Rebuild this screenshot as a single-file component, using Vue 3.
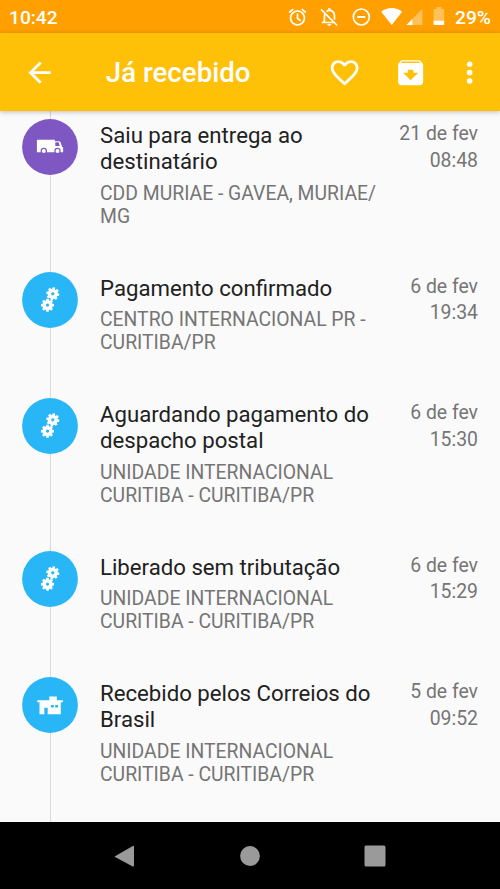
<script setup>
const events = [
  { icon: 'truck', title: ['Saiu para entrega ao', 'destinatário'], place: ['CDD MURIAE - GAVEA, MURIAE/', 'MG'], date: '21 de fev', time: '08:48' },
  { icon: 'gears', title: ['Pagamento confirmado'], place: ['CENTRO INTERNACIONAL PR -', 'CURITIBA/PR'], date: '6 de fev', time: '19:34' },
  { icon: 'gears', title: ['Aguardando pagamento do', 'despacho postal'], place: ['UNIDADE INTERNACIONAL', 'CURITIBA - CURITIBA/PR'], date: '6 de fev', time: '15:30' },
  { icon: 'gears', title: ['Liberado sem tributação'], place: ['UNIDADE INTERNACIONAL', 'CURITIBA - CURITIBA/PR'], date: '6 de fev', time: '15:29' },
  { icon: 'post', title: ['Recebido pelos Correios do', 'Brasil'], place: ['UNIDADE INTERNACIONAL', 'CURITIBA - CURITIBA/PR'], date: '5 de fev', time: '09:52' },
]
const teeth = [0, 45, 90, 135, 180, 225, 270, 315]
const gears = [
  { x: 30.8, y: 21.8, turn: 10 },
  { x: 25.5, y: 33.2, turn: 0 },
]
</script>

<template>
  <div class="screen">
    <header class="status">
      <span class="clock">10:42</span>
      <svg class="status-icons" viewBox="0 0 160 33" fill="#fff">
        <g fill="none" stroke="#fff" stroke-width="1.7">
          <circle cx="11.5" cy="18" r="7" />
          <path d="M11.5 13.5v5l3.4 2.2M3.2 12.5l4-3.4M19.8 12.500l-4-3.400" />
          <circle cx="75.3" cy="17" r="8" />
          <path d="M71.3 17h8" stroke-width="2" />
          <path d="M39.2 13.1c-.7 1.1-.8 2.4-.8 3.900v4.200l-1.300 1.300h12.200M40.600 11.500c3.700-2.700 7.900.1 7.900 4.600v3.700M35 9.300l16.200 16.200" />
        </g>
        <path d="M42 8.200h2.600v2.500H42zM41.300 24h4c0 2.400-4 2.400-4 0z" />
        <path d="M95.200 11.700c5.800-4.900 15.100-4.900 20.900 0L105.700 25z" />
        <path d="M120.500 25l15.800-16v16z" opacity=".35" />
        <path d="M120.500 25l5.800-6v6z" />
        <path d="M147.500 9h3V7h4.800v2h2.900v12h-10.700z" opacity=".35" />
        <path d="M147.500 20.800h10.700v3.100q0 1.100-1.100 1.100h-8.500q-1.100 0-1.100-1.100z" />
      </svg>
      <span class="battery">29%</span>
    </header>

    <nav class="toolbar">
      <svg class="tool" viewBox="0 0 24 24"><path d="M20 11H7.83l5.590-5.590L12 4l-8 8 8 8 1.410-1.410L7.830 13H20v-2z" /></svg>
      <h1>Já recebido</h1>
      <svg class="tool heart" viewBox="0 0 24 24"><path d="M16.5 3c-1.74 0-3.41.81-4.5 2.09C10.91 3.81 9.24 3 7.5 3 4.42 3 2 5.42 2 8.5c0 3.78 3.4 6.86 8.55 11.54L12 21.35l1.45-1.32C18.6 15.36 22 12.28 22 8.5 22 5.42 19.58 3 16.5 3zm-4.4 15.55l-.1.1-.1-.1C7.14 14.24 4 11.39 4 8.5 4 6.5 5.5 5 7.5 5c1.54 0 3.04.99 3.57 2.36h1.87C13.46 5.99 14.96 5 16.5 5c2 0 3.5 1.5 3.5 3.5 0 2.89-3.14 5.74-7.9 10.05z" /></svg>
      <svg class="tool archive" viewBox="0 0 24 24"><path d="M20.54 5.23l-1.39-1.68C18.88 3.21 18.47 3 18 3H6c-.47 0-.88.21-1.16.55L3.46 5.23C3.17 5.57 3 6.02 3 6.5V19c0 1.1.9 2 2 2h14c1.1 0 2-.9 2-2V6.5c0-.48-.17-.93-.46-1.27zM12 17.5L6.5 12H10v-2h4v2h3.5L12 17.5zM5.12 5l.81-1h12l.94 1z" /></svg>
      <svg class="tool more" viewBox="0 0 24 24"><circle cx="12" cy="6" r="2" /><circle cx="12" cy="12" r="2" /><circle cx="12" cy="18" r="2" /></svg>
    </nav>

    <main class="timeline">
      <article v-for="(event, i) in events" :key="i" class="event">
        <svg class="badge" :class="event.icon" viewBox="0 0 56 56">
          <circle cx="28" cy="28" r="27.9" />
          <g v-if="event.icon === 'truck'" fill="#fff" transform="translate(0 .7)">
            <path d="M15.5 20h17.3v1.5h4.3q1 0 1.4 1l1.6 4.6 1 .6v4.9H15.5q-.6 0-.6-.6V20.600q0-.6.6-.6z" />
            <path class="cut" d="M34.3 22.600h2.300l1.200 3.700h-4.500v-2.700q0-1 1-1z" />
            <g class="wheels"><circle cx="21.8" cy="31.2" r="2.6" /><circle cx="35.5" cy="31.2" r="2.6" /></g>
          </g>
          <g v-else-if="event.icon === 'gears'">
            <g v-for="(gear, g) in gears" :key="g" :transform="`translate(${gear.x} ${gear.y}) rotate(${gear.turn})`">
              <path v-for="angle in teeth" :key="angle" fill="#fff" d="M-1.6-3.500l.4-3h2.400l.4 3z" :transform="`rotate(${angle})`" />
              <circle r="3.3" fill="none" stroke="#fff" stroke-width="3.4" />
            </g>
          </g>
          <path v-else fill="#fff" fill-rule="evenodd" d="M15.3 23.300h12v-3.800h7.500v3.800h6.100v1.900h-2.100v12.100H25.700v-6.600h-3.400v6.600h-4.800V25.200h-2.200zM28.900 28v2.500h2.900V28zM33.200 28v2.500h2.900V28z" />
        </svg>
        <div class="details">
          <h2><span v-for="line in event.title" :key="line">{{ line }}</span></h2>
          <p><span v-for="line in event.place" :key="line">{{ line }}</span></p>
        </div>
        <div class="when"><span>{{ event.date }}</span><span>{{ event.time }}</span></div>
      </article>
    </main>

    <footer class="navbar">
      <svg class="back" viewBox="0 0 24 24"><path d="M3 12.200L20.800 2q1.200-.5 1.200.8v19q0 1.200-1.200.6L3 12.900q-.7-.35 0-.7z" /></svg>
      <svg viewBox="0 0 24 24"><circle cx="12" cy="12" r="9.900" /></svg>
      <svg viewBox="0 0 24 24"><rect x="1.500" y="1.500" width="21" height="21" rx="1.500" /></svg>
    </footer>
  </div>
</template>

<style>
body { margin: 0; }
</style>

<style scoped>
.screen {
  width: 500px;
  height: 889px;
  display: flex;
  flex-direction: column;
  overflow: hidden;
  background: #fafafa;
  font-family: Roboto, sans-serif;
}
.status {
  flex: none;
  box-sizing: border-box;
  height: 33px;
  display: flex;
  align-items: center;
  padding: 1px 9px 0;
  background: #ffa000;
  color: #fff;
  font-size: 19.2px;
  font-weight: 500;
}
.status-icons { width: 160px; height: 33px; margin: -1px 9.5px 0 auto; }
.toolbar {
  flex: none;
  box-sizing: border-box;
  height: 78px;
  display: flex;
  align-items: center;
  padding: 1px 14px 0 22.5px;
  background: #ffc107;
  box-shadow: 0 1px 5px rgba(0, 0, 0, 0.25);
  z-index: 1;
}
.tool { width: 33.3px; height: 33.3px; fill: #fff; }
.toolbar h1 {
  margin: 1px auto 0 50px;
  color: #fff;
  font-size: 27.7px;
  font-weight: 500;
  line-height: 36px;
}
.archive { margin-left: 33.4px; }
.more { margin-left: 25px; }
.timeline {
  flex: 1;
  min-height: 0;
  padding: 8.3px 22px 0;
  overflow: hidden;
  background: linear-gradient(#dadada, #dadada) 50px 0 / 1.4px 100% no-repeat;
}
.event { display: flex; align-items: flex-start; padding-bottom: 43.4px; }
.badge { flex: none; width: 56px; height: 56px; fill: #29b6f6; }
.badge.truck, .cut { fill: #7e57c2; }
.wheels { stroke: #7e57c2; stroke-width: 1.2px; }
.details { flex: 1; padding: 2.7px 0 0 22px; white-space: nowrap; }
.details span, .when span { display: block; }
h2 {
  margin: 0 0 8.2px;
  color: #212121;
  font-size: 22.2px;
  font-weight: 400;
  line-height: 26.3px;
}
p { margin: 0; color: #757575; font-size: 19.35px; line-height: 22.9px; }
.when {
  padding-top: 2px;
  color: #757575;
  font-size: 19.4px;
  line-height: 26.3px;
  text-align: right;
}
.navbar {
  flex: none;
  height: 67px;
  display: flex;
  align-items: center;
  justify-content: space-between;
  box-sizing: border-box;
  padding: 0 113px 0 111.5px;
  background: #000;
}
.navbar svg { width: 24px; height: 24px; fill: #9a9a9a; }
.navbar .back { margin-right: 1.5px; }
</style>
